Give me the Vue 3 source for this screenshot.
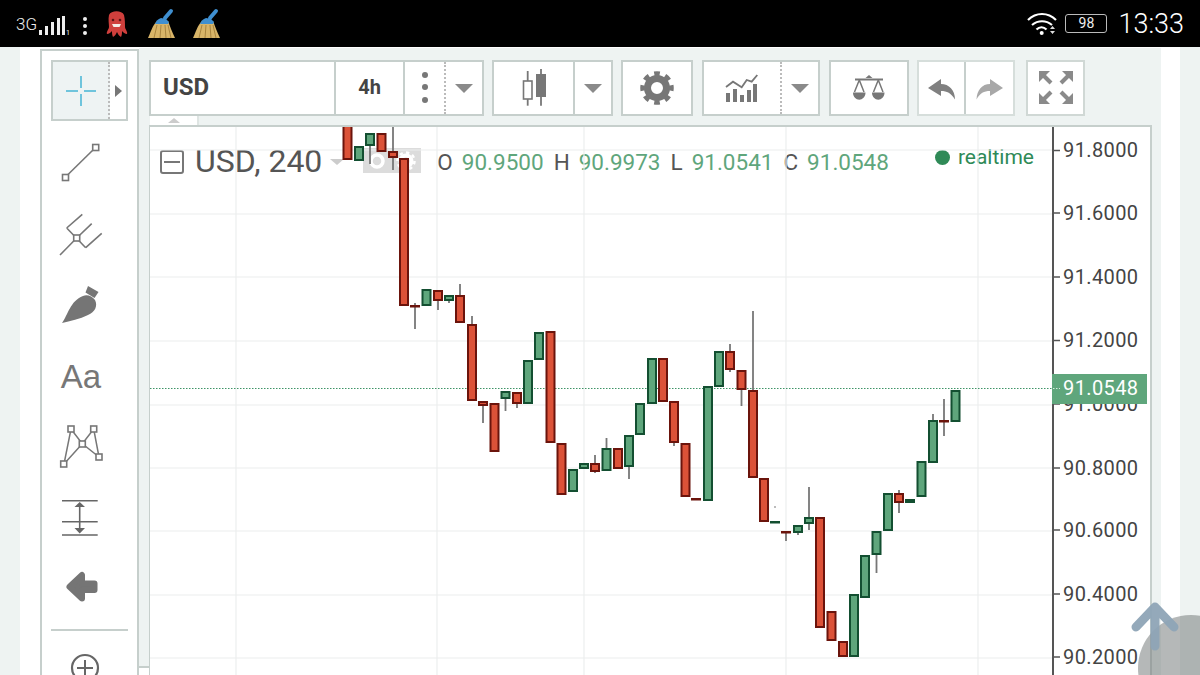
<template>
  <div class="screen">
    <!-- status bar -->
    <header class="status">
      <div class="status-left">
        <span class="net">3G</span>
        <svg class="signal" width="32" height="26" viewBox="38 8 32 26">
          <rect v-for="b in signalBars" :key="b[0]" :x="b[0]" :y="b[1]" width="3" :height="32 - b[1]" fill="#eee" />
          <text x="66" y="32" class="tiny">1</text>
        </svg>
        <svg class="dots" width="8" height="26" viewBox="81 8 8 26">
          <circle cx="85" cy="16" r="2" fill="#eee" />
          <circle cx="85" cy="23" r="2" fill="#eee" />
          <circle cx="85" cy="30" r="2" fill="#eee" />
        </svg>
        <svg class="octo" width="24" height="28" viewBox="105 9 24 28">
          <path d="M109 14c2-5 13-5 15 0 1 4 1 9 1 12 0 2 3 5 2 7-2 0-4-2-5-3 0 2 0 4-1 6-2-1-3-3-4-5-1 2-2 4-4 5-1-2-1-4-1-6-1 1-3 3-5 3-1-2 2-5 2-7 0-3-1-8 0-12z" fill="#cf3f3c" />
          <path d="M112 23h9l-1.500 3h-6z" fill="#f4e9e4" />
          <circle cx="113" cy="19" r="1.300" fill="#5a1414" />
          <circle cx="120" cy="19" r="1.300" fill="#5a1414" />
        </svg>
        <svg v-for="n in 2" :key="n" class="broom" width="30" height="32" viewBox="147 7 30 32">
          <path d="M148 37c3-6 4-12 9-17l11 0c2 5 4 11 7 17z" fill="#d8b468" />
          <path d="M154 37l3-13M160 37l1-13M166 37l-1-13M171 37l-3-13" stroke="#a8843f" stroke-width="1" fill="none" />
          <path d="M155 23c1-3 3-5 6-6l5 1 3 3-1 2z" fill="#3f8fd0" />
          <path d="M165 17l6-7" stroke="#3f8fd0" stroke-width="4" stroke-linecap="round" />
        </svg>
      </div>
      <div class="status-right">
        <svg class="wifi" width="34" height="24" viewBox="1025 11 34 24">
          <path d="M1028 19c8-8 20-8 28 0M1032 24c6-5 14-5 20 0M1036.500 28.500c3-3 7-3 10 0" stroke="#fff" stroke-width="2.200" fill="none" />
          <circle cx="1041.700" cy="32" r="2" fill="#fff" />
          <path d="M1050 28h5l-2.500-3zM1050 30h5l-2.500 3z" fill="#ddd" />
        </svg>
        <div class="battery">98</div>
        <span class="clock">13:33</span>
      </div>
    </header>

    <div class="page">
      <div class="gutter"></div>
      <div class="margin"></div>

      <!-- drawing tools -->
      <aside class="tools">
        <div class="cursor-btn">
          <div class="cursor-main">
            <svg width="32" height="32" viewBox="0 0 32 32">
              <path d="M16 1v12M16 19v12M1 16h12M19 16h12" stroke="#6fc4dc" stroke-width="2" />
            </svg>
          </div>
          <div class="cursor-more"><span class="tri-right"></span></div>
        </div>
        <div class="tool">
          <svg width="50" height="50" viewBox="56 137 50 50">
            <path d="M67 175.500L94 149" stroke="#777" stroke-width="1.600" />
            <rect x="62.500" y="174.500" width="6" height="6" class="node" />
            <rect x="92.700" y="144.500" width="6" height="6" class="node" />
          </svg>
        </div>
        <div class="tool">
          <svg width="50" height="50" viewBox="56 207 50 50">
            <path d="M60 254L76.700 237M66.700 227L85.700 246.700M66.700 227L82.300 213.300M76.700 237L91.700 222.700M85.700 246.700L101.700 232.300" stroke="#777" stroke-width="1.600" fill="none" />
            <rect x="73.700" y="234" width="6" height="6" class="node" />
          </svg>
        </div>
        <div class="tool">
          <svg width="50" height="50" viewBox="56 280 50 50">
            <path d="M62 324C68 316 70 302 83 297C87 295 92 297 95 301C98 307 95 313 88 316C80 320 70 322 62 324Z" fill="#757575" />
            <path d="M88 287L98.500 293L94.500 299L85.500 293.500Z" fill="#757575" />
          </svg>
        </div>
        <div class="tool tool-text">Aa</div>
        <div class="tool">
          <svg width="50" height="50" viewBox="56 423 50 50">
            <path d="M64 466L71 431L82.300 445.700L93.700 431L99 459L82.300 445.700L64 466" stroke="#777" stroke-width="1.500" fill="none" />
            <rect x="68" y="428" width="6" height="6" class="node" />
            <rect x="90.700" y="428" width="6" height="6" class="node" />
            <rect x="79.300" y="443" width="6" height="6" class="node" />
            <rect x="96" y="456" width="6" height="6" class="node" />
            <rect x="60.700" y="463" width="6" height="6" class="node" />
          </svg>
        </div>
        <div class="tool">
          <svg width="50" height="50" viewBox="56 492 50 50">
            <path d="M62 500.700H97.700M62 521.700H97.700M62 535H97.700" stroke="#666" stroke-width="1.600" />
            <path d="M79.700 505V529" stroke="#666" stroke-width="1.600" />
            <path d="M74.500 507L79.700 502L85 507ZM74.500 528L79.700 533.500L85 528Z" fill="#666" />
          </svg>
        </div>
        <div class="tool">
          <svg width="50" height="50" viewBox="56 563 50 50">
            <path d="M69.500 586.700L82 575V583.500H94.500V590H82V598.500Z" fill="#757575" stroke="#757575" stroke-width="6" stroke-linejoin="round" />
          </svg>
        </div>
        <div class="tools-line"></div>
        <div class="tool-zoom">
          <svg width="32" height="32" viewBox="0 0 32 32">
            <circle cx="16" cy="16" r="13" stroke="#666" stroke-width="2.200" fill="none" />
            <path d="M16 8v16M8 16h16" stroke="#666" stroke-width="2" />
          </svg>
        </div>
      </aside>

      <main class="main">
        <!-- top toolbar -->
        <div class="toolbar">
          <div class="group">
            <div class="cell symbol">USD</div>
            <div class="cell interval">4h</div>
            <div class="cell menu">
              <span class="dot"></span><span class="dot"></span><span class="dot"></span>
            </div>
            <div class="cell drop dotted"><span class="tri-down"></span></div>
          </div>
          <div class="group">
            <div class="cell w81">
              <svg width="32" height="40" viewBox="516 68 32 40">
                <path d="M525.700 71V105.700" stroke="#777" stroke-width="1.800" />
                <rect x="521.500" y="81" width="8.500" height="18" fill="#fff" stroke="#777" stroke-width="1.600" />
                <path d="M539 69V105.700" stroke="#777" stroke-width="1.800" />
                <rect x="534" y="74" width="10" height="23" fill="#777" />
              </svg>
            </div>
            <div class="cell drop solid"><span class="tri-down"></span></div>
          </div>
          <div class="group gear">
            <div class="cell w70">
              <svg width="36" height="36" viewBox="0 0 36 36">
                <circle cx="18" cy="18" r="9.500" stroke="#777" stroke-width="7" fill="none" />
                <circle cx="18" cy="18" r="14.500" stroke="#777" stroke-width="4.500" fill="none" pathLength="16" stroke-dasharray="1 1" stroke-dashoffset="0.500" />
              </svg>
            </div>
          </div>
          <div class="group indicators">
            <div class="cell w78">
              <svg width="36" height="32" viewBox="724 72 36 32">
                <path d="M726 87L733 81.700L741.700 87.300L746.700 80L751.700 81.700L757.300 75" stroke="#777" stroke-width="1.800" fill="none" />
                <rect v-for="b in indicatorBars" :key="b[0]" :x="b[0]" :y="b[1]" width="4" :height="102 - b[1]" fill="#777" />
              </svg>
            </div>
            <div class="cell drop dotted"><span class="tri-down"></span></div>
          </div>
          <div class="group">
            <div class="cell w78">
              <svg width="36" height="32" viewBox="851 72 36 32">
                <path d="M855 79.500H883" stroke="#777" stroke-width="2" />
                <path d="M865.500 78L869 75L872.500 78Z" fill="#777" />
                <path d="M859.300 80L854.500 92M859.300 80L864 92M878.300 80L873.500 92M878.300 80L883 92" stroke="#777" stroke-width="1.500" fill="none" />
                <path d="M853 92.500H865.500C865.500 102 853 102 853 92.500ZM872 92.500H884.500C884.500 102 872 102 872 92.500Z" fill="#777" />
              </svg>
            </div>
          </div>
          <div class="group history">
            <div class="cell w48 undo">
              <svg width="30" height="26" viewBox="928 75 30 26">
                <path d="M929 88L942 79V84C950 84 956 90 956 99.500C952 93 948 91 942 91V96Z" fill="#808080" />
              </svg>
            </div>
            <div class="cell w48">
              <svg width="30" height="26" viewBox="976 75 30 26">
                <path d="M1004 88L991 79V84C983 84 978 90 977.500 99.500C981 93 985 91 991 91V96Z" fill="#a8a8a8" />
              </svg>
            </div>
          </div>
          <div class="group full">
            <div class="cell w58">
              <svg width="38" height="38" viewBox="1037 69 38 38">
                <g v-for="a in fullArrows" :key="a.tri">
                  <polygon :points="a.tri" fill="#8a8a8a" />
                  <path :d="a.line" stroke="#8a8a8a" stroke-width="4" />
                </g>
              </svg>
            </div>
          </div>
        </div>

        <div class="tab-strip">
          <div class="tab"><span class="tri-up"></span></div>
        </div>

        <!-- chart -->
        <div class="chart">
          <div class="legend">
            <span class="collapse"><i></i></span>
            <span class="legend-name">USD, 240</span>
            <span class="legend-tri"></span>
            <span class="legend-tiles">
              <span class="tile">
                <svg width="29" height="25" viewBox="0 0 29 25">
                  <circle cx="14" cy="13" r="6" stroke="#fff" stroke-width="3.500" fill="none" />
                </svg>
              </span>
              <span class="tile">
                <svg width="29" height="25" viewBox="0 0 29 25">
                  <circle cx="14" cy="13" r="5.500" stroke="#fff" stroke-width="4" fill="none" />
                  <circle cx="14" cy="13" r="8.500" stroke="#fff" stroke-width="2.500" fill="none" pathLength="16" stroke-dasharray="1 1" />
                </svg>
              </span>
            </span>
            <span class="ohlc">
              <template v-for="o in ohlc" :key="o.k">
                <span class="ohlc-key">{{ o.k }}</span>
                <span class="ohlc-val">{{ o.v }}</span>
              </template>
            </span>
          </div>
          <div class="realtime"><span class="rt-dot"></span>realtime</div>

          <svg class="plot" width="1002" height="548" viewBox="150 127 1002 548">
            <line v-for="y in gridY" :key="'h' + y" x1="150" :x2="1053" :y1="y" :y2="y" stroke="#eceeee" stroke-width="1.200" />
            <line v-for="x in gridX" :key="'v' + x" :x1="x" :x2="x" y1="127" y2="675" stroke="#eceeee" stroke-width="1.200" />
            <line x1="150" x2="1053" y1="388.500" y2="388.500" stroke="#3f9467" stroke-width="1" stroke-dasharray="1.500 1.500" />

            <g v-for="(c, i) in candles" :key="i">
              <line v-if="c[3] !== c[1] || c[4] !== c[2]" :x1="c[0]" :x2="c[0]" :y1="c[3]" :y2="c[4]" stroke="#777" stroke-width="1.800" />
              <rect
                :x="c[0] - 4"
                :y="c[1] + 1"
                width="8"
                :height="Math.max(c[2] - c[1] - 2, 0.5)"
                :fill="c[5] === 'r' ? '#dc5238' : '#5fa67c'"
                :stroke="c[5] === 'r' ? '#6b140c' : '#134f31'"
                stroke-width="2"
              />
            </g>
            <circle cx="775" cy="507" r="0.800" fill="#666" />

            <line x1="1053" x2="1053" y1="127" y2="675" stroke="#555" stroke-width="2" />
            <g v-for="t in ticks" :key="t.label">
              <line x1="1053" x2="1060" :y1="t.y" :y2="t.y" stroke="#555" stroke-width="1.500" />
              <text x="1063" :y="t.y + 6.500" class="axis">{{ t.label }}</text>
            </g>
            <rect x="1052" y="374" width="95" height="30" fill="#5fa67c" />
            <line x1="1053" x2="1060" y1="388.500" y2="388.500" stroke="#d7ebdf" stroke-width="1" stroke-dasharray="1.500 1.500" />
            <text x="1063" y="395" class="axis last">91.0548</text>
          </svg>
        </div>
        <div class="scroll-stub"></div>
      </main>

      <div class="margin right"></div>
      <div class="gutter"></div>
    </div>

    <!-- floating scroll up button -->
    <div class="float-circle"></div>
    <svg class="float-arrow" width="56" height="56" viewBox="0 0 56 56">
      <path d="M8 27L27 7L46 27M27 9V46" stroke="#8ea4b6" stroke-opacity="0.95" stroke-width="9" stroke-linecap="round" stroke-linejoin="round" fill="none" />
    </svg>
  </div>
</template>

<script setup>
const signalBars = [[39, 27], [45, 23], [51, 19], [57, 15], [62, 13]]
const indicatorBars = [[726, 93], [733, 89], [740, 95], [747, 90], [753, 84]]

const fullArrows = [
  { tri: '1039,71 1050,71 1039,82', line: 'M1043 75L1051 83' },
  { tri: '1073,71 1062,71 1073,82', line: 'M1069 75L1061 83' },
  { tri: '1039,104 1050,104 1039,93', line: 'M1043 100L1051 92' },
  { tri: '1073,104 1062,104 1073,93', line: 'M1069 100L1061 92' }
]

const ohlc = [
  { k: 'O', v: '90.9500' },
  { k: 'H', v: '90.9973' },
  { k: 'L', v: '91.0541' },
  { k: 'C', v: '91.0548' }
]

const gridY = [150, 214, 277, 341, 405, 468, 531, 595, 658]
const gridX = [236, 437, 584, 786, 978]

const ticks = [
  { y: 150.5, label: '91.8000' },
  { y: 213, label: '91.6000' },
  { y: 277, label: '91.4000' },
  { y: 340.5, label: '91.2000' },
  { y: 404, label: '91.0000' },
  { y: 468, label: '90.8000' },
  { y: 530, label: '90.6000' },
  { y: 594, label: '90.4000' },
  { y: 657, label: '90.2000' }
]

// x, body top, body bottom, wick top, wick bottom, colour
const candles = [
  [347.5, 125, 160, 125, 160, 'r'],
  [359, 146, 161, 146, 161, 'g'],
  [370, 133, 146, 133, 164, 'g'],
  [381.5, 133, 152, 133, 152, 'r'],
  [393, 151, 158, 127, 170, 'r'],
  [404, 158, 306, 158, 306, 'r'],
  [415, 305, 306, 303, 329, 'r'],
  [426.5, 289, 306, 289, 306, 'g'],
  [438, 290, 301, 290, 310, 'r'],
  [449, 295, 301, 295, 303, 'g'],
  [460, 295, 323, 284, 323, 'r'],
  [472, 324, 401, 316, 401, 'r'],
  [483, 401, 406, 401, 423, 'r'],
  [494.5, 403, 452, 403, 452, 'r'],
  [505.5, 391, 399, 391, 411, 'g'],
  [517, 392, 404, 392, 408, 'r'],
  [528, 360, 404, 360, 404, 'g'],
  [539, 332, 360, 332, 360, 'g'],
  [550.5, 331, 443, 331, 443, 'r'],
  [561.5, 443, 495, 443, 495, 'r'],
  [573, 469, 492, 469, 492, 'g'],
  [584, 463, 469, 463, 469, 'g'],
  [595, 463, 472, 455, 473, 'r'],
  [606.5, 448, 471, 438, 471, 'g'],
  [618, 448, 469, 448, 469, 'r'],
  [629, 435, 467, 435, 479, 'g'],
  [640, 403, 435, 403, 435, 'g'],
  [652, 358, 404, 358, 404, 'g'],
  [663, 358, 402, 358, 402, 'r'],
  [674, 401, 443, 401, 446, 'r'],
  [685.5, 443, 497, 443, 497, 'r'],
  [696, 498, 499, 498, 499, 'r'],
  [708, 386, 501, 386, 501, 'g'],
  [719, 351, 387, 351, 387, 'g'],
  [730, 351, 370, 344, 372, 'r'],
  [741.5, 370, 390, 370, 406, 'r'],
  [753, 390, 478, 311, 478, 'r'],
  [764, 478, 522, 478, 522, 'r'],
  [775, 521, 522, 521, 522, 'g'],
  [786, 531, 533, 531, 541, 'r'],
  [798, 525, 533, 525, 535, 'g'],
  [809, 517, 524, 487, 530, 'g'],
  [820, 517, 628, 517, 628, 'r'],
  [831.5, 611, 641, 611, 641, 'r'],
  [843, 641, 657, 641, 657, 'r'],
  [854, 594, 657, 594, 657, 'g'],
  [865, 555, 598, 555, 598, 'g'],
  [876.5, 531, 555, 531, 573, 'g'],
  [888, 493, 531, 493, 531, 'g'],
  [899, 493, 503, 490, 513, 'r'],
  [910, 499, 503, 499, 503, 'g'],
  [921.5, 461, 497, 461, 497, 'g'],
  [933, 420, 463, 414, 463, 'g'],
  [944, 420, 422, 399, 436, 'r'],
  [955.5, 390, 422, 390, 422, 'g']
]
</script>

<style>
html,
body {
  margin: 0;
  background: #fff;
  overflow: hidden;
}
</style>

<style scoped>
.screen {
  position: relative;
  width: 1200px;
  height: 675px;
  overflow: hidden;
  font-family: Roboto, "Liberation Sans", sans-serif;
}

/* 状态栏 */
.status {
  height: 47px;
  background: #000;
  display: flex;
  justify-content: space-between;
  align-items: center;
  padding: 0 16px;
  box-sizing: border-box;
  color: #eee;
}

.status-left,
.status-right {
  display: flex;
  align-items: center;
}

.net {
  font-size: 17px;
  font-weight: 300;
  width: 22px;
}

.tiny {
  font-size: 7px;
  fill: #eee;
}

.dots {
  margin-left: 11px;
}

.octo {
  margin-left: 16px;
}

.broom {
  margin-left: 15px;
}

.octo + .broom {
  margin-left: 18px;
}

.battery {
  width: 42px;
  height: 19px;
  margin-left: 6px;
  border: 1px solid #bbb;
  border-radius: 3px;
  box-sizing: border-box;
  font-size: 14px;
  line-height: 17px;
  text-align: center;
  color: #eee;
}

.clock {
  margin-left: 11px;
  font-size: 27px;
  font-weight: 300;
  color: #fff;
}

/* 页面 */
.page {
  display: flex;
  height: 628px;
  overflow: hidden;
}

.gutter {
  width: 20px;
  flex-shrink: 0;
  background: #eef3f2;
}

.margin {
  width: 20px;
  background: #fff;
  flex-shrink: 0;
}

.margin.right {
  width: 19px;
}

.tools {
  width: 99px;
  height: 640px;
  margin-top: 2px;
  box-sizing: border-box;
  border: 2px solid #c6cfcc;
  border-bottom: 0;
  background: #fff;
  padding: 9px 9px 0;
  display: flex;
  flex-direction: column;
  flex-shrink: 0;
}

.cursor-btn {
  display: flex;
  width: 77px;
  height: 61px;
  flex-shrink: 0;
  box-sizing: border-box;
  border: 2px solid #c6cfcc;
  background: #eef3f3;
  margin-bottom: 5px;
}

.cursor-main {
  flex: 1;
  display: flex;
  align-items: center;
  justify-content: center;
  border-right: 2px dotted #bbb;
}

.cursor-more {
  width: 16px;
  display: flex;
  align-items: center;
  justify-content: center;
  background: #fff;
}

.tri-right {
  border-left: 7px solid #777;
  border-top: 6px solid transparent;
  border-bottom: 6px solid transparent;
}

.tool {
  height: 71px;
  flex-shrink: 0;
  display: flex;
  align-items: center;
  justify-content: center;
  margin-left: -9px;
  margin-right: 8px;
}

.node {
  fill: #fff;
  stroke: #777;
  stroke-width: 1.600;
}

.tool-text {
  font-family: "Liberation Sans", Arial, sans-serif;
  font-size: 33px;
  color: #777;
  padding-top: 5px;
  box-sizing: border-box;
}

.tools-line {
  height: 2px;
  background: #c6cfcc;
  margin-top: 6px;
  flex-shrink: 0;
}

.tool-zoom {
  margin-top: 21px;
  display: flex;
  justify-content: center;
  padding-right: 10px;
  flex-shrink: 0;
}

.main {
  position: relative;
  flex: 1;
  background: #eef3f2;
  margin-top: 1px;
  padding: 12px 9px 0 10px;
  min-width: 0;
}

/* 工具栏 */
.toolbar {
  display: flex;
  height: 56px;
}

.group {
  display: flex;
  margin-right: 8px;
  border: 2px solid #c6cfcc;
  background: #fff;
  box-sizing: border-box;
}

.gear,
.indicators {
  margin-right: 9px;
}

.history {
  margin-right: 11px;
  border-color: #d6dedb;
}

.full {
  margin-right: 0;
  border-color: #d0d8d5;
}

.cell {
  display: flex;
  align-items: center;
  justify-content: center;
  color: #444;
  font-weight: 700;
  box-sizing: border-box;
}

.symbol {
  width: 185px;
  justify-content: flex-start;
  padding: 0 0 3px 12px;
  font-size: 24px;
  border-right: 2px solid #c6cfcc;
}

.interval {
  width: 69px;
  font-size: 20px;
  padding-bottom: 3px;
  border-right: 2px solid #c6cfcc;
}

.menu {
  width: 39px;
  flex-direction: column;
  gap: 6.500px;
  padding-bottom: 2px;
}

.dot {
  width: 6px;
  height: 6px;
  border-radius: 50%;
  background: #777;
}

.drop {
  width: 38px;
}

.drop.dotted {
  border-left: 2px dotted #bbb;
}

.drop.solid {
  border-left: 2px solid #c6cfcc;
}

.tri-down {
  border-top: 9px solid #8a8a8a;
  border-left: 9px solid transparent;
  border-right: 9px solid transparent;
}

.w81 {
  width: 79px;
}

.w70 {
  width: 68px;
}

.w78 {
  width: 76px;
}

.w48 {
  width: 47px;
}

.w58 {
  width: 55px;
}

.undo {
  border-right: 2px solid #c6cfcc;
}

.tab-strip {
  height: 9px;
  display: flex;
  padding-left: 1px;
}

.tab {
  width: 47px;
  background: #fff;
  border-right: 2px solid #dfe5e3;
  display: flex;
  justify-content: center;
  align-items: center;
}

.tri-up {
  border-bottom: 5px solid #ccc;
  border-left: 6px solid transparent;
  border-right: 6px solid transparent;
}

/* 图表 */
.chart {
  position: relative;
  height: 560px;
  box-sizing: border-box;
  border: 2px solid #c6cfcc;
  border-left-width: 1px;
  border-bottom: 0;
  background: #fff;
}

.plot {
  position: absolute;
  left: 0;
  top: 0;
}

.axis {
  font-family: Roboto, "Liberation Sans", sans-serif;
  font-size: 20px;
  letter-spacing: 0.4px;
  fill: #444;
}

.axis.last {
  fill: #fff;
}

.legend {
  position: absolute;
  left: 10px;
  top: 16px;
  display: flex;
  align-items: center;
  height: 38px;
}

.collapse {
  width: 24px;
  height: 24px;
  box-sizing: border-box;
  border: 2px solid #777;
  border-radius: 3px;
  display: flex;
  align-items: center;
  justify-content: center;
}

.collapse i {
  width: 16px;
  height: 2px;
  background: #777;
}

.legend-name {
  margin: -2px 0 0 11px;
  font-size: 32px;
  color: #555;
}

.legend-tri {
  margin-left: 8px;
  border-top: 6px solid #ccc;
  border-left: 7px solid transparent;
  border-right: 7px solid transparent;
}

.legend-tiles {
  margin-left: 19px;
  display: flex;
  margin-top: -3px;
}

.tile {
  width: 29px;
  height: 25px;
  background: #dcdcdc;
  display: flex;
}

.ohlc {
  margin-left: 16px;
  display: flex;
  align-items: baseline;
  font-size: 22.500px;
}

.ohlc-key {
  color: #555;
  margin-right: 9px;
}

.ohlc-val {
  color: #5fa67c;
  margin-right: 10px;
}

.realtime {
  position: absolute;
  right: 116px;
  top: 18px;
  display: flex;
  align-items: center;
  gap: 8px;
  font-size: 21px;
  color: #2f8a57;
}

.rt-dot {
  width: 15px;
  height: 15px;
  border-radius: 50%;
  background: #2f8a57;
}

.scroll-stub {
  position: absolute;
  left: 0;
  top: 618px;
  width: 10px;
  height: 12px;
  box-sizing: border-box;
  border-top: 2px solid #c6cfcc;
  background: #fff;
}

.float-circle {
  position: absolute;
  left: 1138px;
  top: 615px;
  width: 106px;
  height: 106px;
  border-radius: 50%;
  background: rgba(120, 125, 125, 0.55);
}

.float-arrow {
  position: absolute;
  left: 1128px;
  top: 600px;
}
</style>
